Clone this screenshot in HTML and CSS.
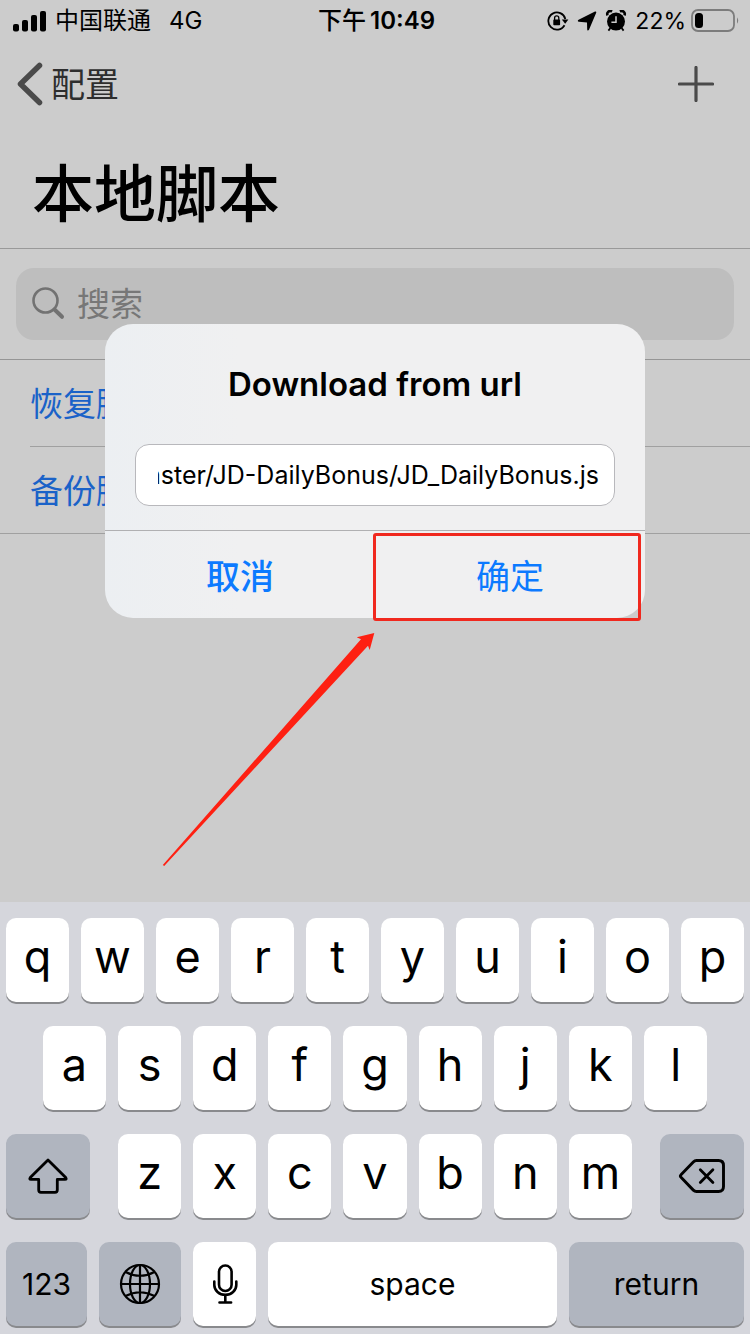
FILE: index.html
```html
<!DOCTYPE html>
<html lang="zh-CN">
<head>
<meta charset="utf-8">
<meta name="viewport" content="width=device-width, initial-scale=1">
<title>本地脚本</title>
<link rel="stylesheet" href="styles.css">
</head>
<body>
<main class="screen">
  <header class="status">
    <div class="status-left">
      <svg class="signal" width="34" height="22" viewBox="0 0 34 22" aria-hidden="true"><rect x="0" y="14" width="6" height="7.500" rx="2"/><rect x="9" y="10" width="6" height="11.500" rx="2"/><rect x="18" y="5" width="6" height="16.500" rx="2"/><rect x="27" y="1" width="6" height="20.500" rx="2"/></svg>
      <span class="carrier">中国联通</span>
      <span>4G</span>
    </div>
    <div class="status-time">下午<b>10:49</b></div>
    <div class="status-right">
      <svg width="22" height="22" viewBox="0 0 22 22" aria-hidden="true"><path d="M17.500 15.200A8.600 8.600 0 1 1 18.300 9" fill="none" stroke="#000" stroke-width="1.800"/><path d="M14.800 9.400h6.600l-3.200 4.400z"/><rect x="6.300" y="9.600" width="6.800" height="5.600" rx=".8"/><path d="M7.600 10V8a2.100 2.100 0 0 1 4.200 0v2" fill="none" stroke="#000" stroke-width="1.300"/></svg>
      <svg width="20" height="22" viewBox="0 0 20 22" aria-hidden="true"><path d="M18 1.600Q19.600 1.200 19.200 2.800L12 19.800Q10.700 21.600 10.200 19.400L10 12.400 2 11.800Q-.2 11.200 1.600 9.800z"/></svg>
      <svg width="22" height="22" viewBox="0 0 22 22" aria-hidden="true"><circle cx="11" cy="11.600" r="9"/><path d="M2.600 5.400A3 3 0 0 1 7 1.600M15 1.600A3 3 0 0 1 19.400 5.400" fill="none" stroke="#000" stroke-width="2.600"/><path d="m5.400 18-2 2.600M16.600 18l2 2.600" stroke="#000" stroke-width="1.800"/><path d="M11 6.200v6H6.400" fill="none" stroke="#ccc" stroke-width="1.500"/></svg>
      <span class="percent">22%</span>
      <svg width="50" height="24" viewBox="0 0 50 24" aria-hidden="true"><rect x="2" y="1" width="42" height="21" rx="6" fill="none" stroke="#7c7c7c" stroke-width="1.800"/><rect x="5" y="4" width="8" height="15" rx="3.500"/><path d="M47 8.200q2.400 3.300 0 6.600z" fill="#7c7c7c"/></svg>
    </div>
  </header>

  <nav class="nav">
    <button class="back" type="button">
      <svg width="28" height="44" viewBox="0 0 28 44" aria-hidden="true"><path d="M23.500 3.500 4.500 22l19 18.500" fill="none" stroke="#4a4a4a" stroke-width="5.500" stroke-linecap="round" stroke-linejoin="round"/></svg>
      <span>配置</span>
    </button>
    <button class="add" type="button" aria-label="添加">
      <svg width="36" height="36" viewBox="0 0 36 36" aria-hidden="true"><path d="M18 1.500v33M1.500 18h33" stroke="#4a4a4a" stroke-width="3.200" stroke-linecap="round"/></svg>
    </button>
  </nav>

  <h1 class="title">本地脚本</h1>

  <div class="search-wrap">
    <label class="search">
      <svg width="34" height="34" viewBox="0 0 34 34" aria-hidden="true"><circle cx="13.500" cy="13.500" r="12" fill="none" stroke="#727272" stroke-width="2.600"/><path d="m22.500 22.500 7.500 7.300" stroke="#727272" stroke-width="4" stroke-linecap="round"/></svg>
      <input type="search" placeholder="搜索" aria-label="搜索">
    </label>
  </div>

  <ul class="list">
    <li><button type="button">恢复脚本</button></li>
    <li><button type="button">备份脚本</button></li>
  </ul>

  <div class="overlay">
    <form class="dialog" role="dialog" aria-labelledby="dialog-title">
      <div class="dialog-body">
        <h2 id="dialog-title">Download from url</h2>
        <input class="url" type="text" dir="rtl" aria-labelledby="dialog-title" value="master/JD-DailyBonus/JD_DailyBonus.js">
      </div>
      <div class="actions">
        <button class="cancel" type="button">取消</button>
        <button class="confirm" type="button">确定</button>
      </div>
      <svg class="arrow" width="220" height="240" viewBox="0 0 220 240" aria-hidden="true"><path d="M214.300 3 196.700 7.300 201 9.300 2.800 235 4.200 236 208 15.700 209.700 20z" fill="#fe2012"/></svg>
    </form>
  </div>
</main>

<section class="keyboard" aria-label="Keyboard">
  <div class="keys">
    <button class="key">q</button><button class="key">w</button><button class="key">e</button><button class="key">r</button><button class="key">t</button><button class="key">y</button><button class="key">u</button><button class="key">i</button><button class="key">o</button><button class="key">p</button>
  </div>
  <div class="keys inset">
    <button class="key">a</button><button class="key">s</button><button class="key">d</button><button class="key">f</button><button class="key">g</button><button class="key">h</button><button class="key">j</button><button class="key">k</button><button class="key">l</button>
  </div>
  <div class="keys third">
    <button class="key dark" aria-label="shift"><svg width="40" height="36" viewBox="0 0 40 36" aria-hidden="true"><path d="M20 2 2.300 19.600Q1 21.400 3 21.400H10.700V32q0 2.300 2.300 2.300H27q2.300 0 2.300-2.300V21.400H37q2 0 .7-1.800z" fill="none" stroke="#000" stroke-width="2.800" stroke-linejoin="round"/></svg></button>
    <div class="keys letters">
      <button class="key">z</button><button class="key">x</button><button class="key">c</button><button class="key">v</button><button class="key">b</button><button class="key">n</button><button class="key">m</button>
    </div>
    <button class="key dark" aria-label="delete"><svg width="48" height="36" viewBox="0 0 48 36" aria-hidden="true"><path d="M18.500 2.500H40.500q5 0 5 5v21q0 5-5 5H18.500q-1.800 0-3.200-1.400L3 19.300q-1.400-1.300 0-2.600L15.300 3.900Q16.700 2.500 18.500 2.500z" fill="none" stroke="#000" stroke-width="2.900"/><path d="m22.300 11.800 12.600 12.600M34.900 11.800 22.300 24.400" stroke="#000" stroke-width="2.800" stroke-linecap="round"/></svg></button>
  </div>
  <div class="keys bottom">
    <button class="key dark word">123</button>
    <button class="key dark" aria-label="language"><svg width="42" height="42" viewBox="0 0 42 42" fill="none" stroke="#000" stroke-width="2.200" aria-hidden="true"><circle cx="21" cy="21" r="19"/><ellipse cx="21" cy="21" rx="10" ry="19"/><path d="M21 2v38M2 21h38M6.500 9Q21 16.500 35.500 9M6.500 33Q21 25.500 35.500 33"/></svg></button>
    <button class="key" aria-label="dictate"><svg width="26" height="42" viewBox="0 0 26 42" fill="none" stroke="#000" stroke-width="2.600" stroke-linecap="round" aria-hidden="true"><rect x="7" y="2.500" width="12.600" height="25.500" rx="6.300"/><path d="M2.300 18.500v3.500a11 9.800 0 0 0 22 0v-3.500M13.300 32v7.500M7.500 39.500h11.600"/></svg></button>
    <button class="key word">space</button>
    <button class="key dark word">return</button>
  </div>
</section>
</body>
</html>
```

FILE: styles.css
```css
* { box-sizing: border-box; }

body {
  margin: 0;
  min-height: 100vh;
  display: flex;
  flex-direction: column;
  background: #ccc;
  color: #000;
  font-family: Inter, "Noto Sans CJK SC", sans-serif;
}

button, input {
  margin: 0;
  padding: 0;
  border: 0;
  background: none;
  color: inherit;
  font: inherit;
}

svg { display: block; flex: none; }
h1, h2, ul { margin: 0; padding: 0; }

.screen {
  position: relative;
  flex: 1;
  display: flex;
  flex-direction: column;
}

.status {
  display: grid;
  grid-template-columns: 1fr auto 1fr;
  align-items: center;
  height: 40px;
  padding: 1px 10px 0 13px;
  font-size: 24px;
  line-height: 40px;
}
.status-left, .status-right { display: flex; align-items: center; }
.carrier { margin: 0 18px 0 8px; }
.status-time { display: flex; gap: 4px; font-weight: 500; }
.status-time b { font-weight: 600; }
.status-right { justify-content: flex-end; gap: 8px; }
.status-right svg:last-child { margin-left: -4px; }
.percent { font-size: 23px; }

.nav {
  display: flex;
  align-items: center;
  justify-content: space-between;
  height: 88px;
  padding: 0 36px 0 16px;
}
.back {
  display: flex;
  align-items: center;
  gap: 7px;
  font-size: 34px;
  line-height: 44px;
  color: #2e2e2e;
}
.back span { padding-top: 2px; }

.title {
  height: 121px;
  padding: 22px 32px 0;
  border-bottom: 1px solid #999;
  font-size: 62px;
  line-height: 90px;
  font-weight: 500;
}

.search-wrap {
  padding: 19px 16px;
  border-bottom: 1px solid #959595;
}
.search {
  display: flex;
  align-items: center;
  gap: 11px;
  height: 72px;
  padding: 0 16px;
  border-radius: 18px;
  background: #bebebe;
}
.search input {
  flex: 1;
  min-width: 0;
  outline: 0;
  font-size: 33px;
  line-height: 44px;
}
.search input::placeholder { color: #777; opacity: 1; }

.list {
  list-style: none;
  border-bottom: 1px solid #a0a0a0;
}
.list li { margin-left: 30px; }
.list li + li { border-top: 1px solid #a0a0a0; }
.list button {
  width: 100%;
  height: 86px;
  padding-bottom: 2px;
  text-align: left;
  color: #1a62c8;
  font-size: 33px;
}

.overlay {
  position: absolute;
  inset: 40px 0 0;
  display: flex;
  align-items: center;
  justify-content: center;
}
.dialog {
  position: relative;
  width: 72%;
  border-radius: 28px;
  background: linear-gradient(90deg, #eceff2, #f0f0f1 25%);
}
.dialog-body {
  padding: 36px 30px 24px;
  border-bottom: 1px solid #b0b0b2;
}
.dialog h2 {
  margin-bottom: 36px;
  font-size: 33px;
  line-height: 48px;
  font-weight: 600;
  text-align: center;
}
.url {
  display: block;
  width: 100%;
  height: 62px;
  padding: 0 15px 0 22px;
  border: 1px solid #b8b8bc;
  border-radius: 14px;
  background: #fff;
  font-size: 25px;
}
.actions {
  display: grid;
  grid-template-columns: 1fr 1fr;
  height: 87px;
  color: #0c7aff;
  font-size: 34px;
}
.cancel { font-weight: 500; }
.confirm { position: relative; }
.confirm::after {
  content: "";
  position: absolute;
  inset: 2px 4px -3px -2px;
  border: 3px solid #f0281e;
  border-radius: 3px;
}
.arrow {
  position: absolute;
  left: 55px;
  top: calc(100% + 12px);
}

.keyboard {
  display: grid;
  gap: 24px;
  padding: 16px 6px 8px;
  background: #d5d6dc;
}
.keys { display: flex; gap: 12px; }
.inset { padding: 0 5%; }
.key {
  flex: 1 1 0;
  min-width: 0;
  height: 84px;
  padding-bottom: 8px;
  display: flex;
  align-items: center;
  justify-content: center;
  border-radius: 10px;
  background: #fff;
  box-shadow: 0 2px 0 #898a8d;
  font-size: 45px;
  font-weight: 400;
}
.key:has(svg), .word { padding-bottom: 0; }
.dark { background: #b0b5bf; }
.third { gap: 28px; }
.third > .key { flex-grow: 84; }
.letters { flex: 514 1 0; }
.word { font-size: 30px; }
.bottom .key:nth-child(1) { flex-grow: 81; }
.bottom .key:nth-child(2) { flex-grow: 82; }
.bottom .key:nth-child(3) { flex-grow: 63; }
.bottom .key:nth-child(4) { flex-grow: 289; }
.bottom .key:nth-child(5) { flex-grow: 175; }
```
